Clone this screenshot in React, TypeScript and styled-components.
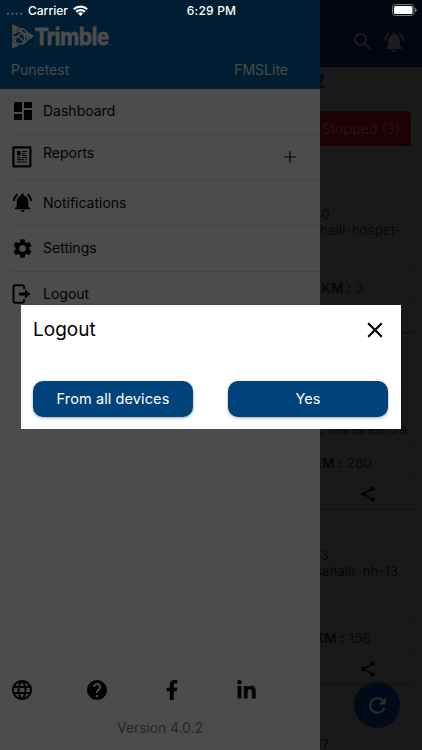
import React from "react";
import styled, { createGlobalStyle } from "styled-components";
import {
  MdDashboard,
  MdNotificationsActive,
  MdSettings,
  MdSearch,
  MdShare,
  MdRefresh,
  MdHelp,
  MdLanguage,
  MdClose,
} from "react-icons/md";
import { FaFacebookF, FaLinkedinIn } from "react-icons/fa";

const GlobalStyle = createGlobalStyle`
  *, *::before, *::after { box-sizing: border-box; }
  body { margin: 0; background: #191919; font-family: Inter, "Liberation Sans", sans-serif; }
  svg { display: block; flex: none; }
  button { font: inherit; border: 0; padding: 0; background: none; color: inherit; }
`;

const Screen = styled.main`
  position: relative;
  width: 422px;
  height: 750px;
  overflow: hidden;
  background: #191919;
`;

/* status bar */
const StatusBar = styled.header`
  position: absolute;
  inset: 0 0 auto 0;
  z-index: 3;
  height: 21px;
  padding: 0 5px 0 6px;
  display: grid;
  grid-template-columns: 1fr auto 1fr;
  align-items: center;
  color: #fff;
  font-size: 12px;
  font-weight: 500;
  line-height: 21px;
`;
const Carrier = styled.div`
  display: flex;
  align-items: center;
`;
const CarrierName = styled.span`
  margin: 0 5px;
`;
const Time = styled.span`
  letter-spacing: 0.2px;
`;
const BatterySlot = styled.div`
  display: flex;
  justify-content: flex-end;
  padding-bottom: 1px;
`;

/* page behind the drawer */
const Page = styled.section`
  display: flex;
  flex-direction: column;
  height: 750px;
  color: #070707;
`;
const TopBar = styled.div`
  flex: none;
  height: 67px;
  padding: 17px 16px 0 0;
  display: flex;
  justify-content: flex-end;
  align-items: center;
  gap: 7px;
  background: #00050f;
  color: #1d1d1d;
`;
const VehicleStrip = styled.div`
  flex: none;
  height: 31px;
  border-bottom: 1px solid #141414;
  padding: 3px 97px 0 0;
  text-align: right;
  font-size: 20px;
  font-weight: 800;
  line-height: 22px;
  color: #030a12;
`;
const Stopped = styled.div`
  flex: none;
  align-self: flex-end;
  width: 120px;
  height: 35px;
  margin: 13px 11px 18px 0;
  padding-right: 11px;
  border-radius: 2px;
  background: #1a0205;
  color: #300f12;
  font-size: 14px;
  line-height: 35px;
  text-align: right;
`;
const Card = styled.article<{ $height: number; $gap: number }>`
  flex: none;
  height: ${(p) => p.$height}px;
  width: 407px;
  margin: 0 0 ${(p) => p.$gap}px 8px;
  border: 1px solid #161616;
  border-bottom-color: #111;
  display: flex;
  flex-direction: column;
`;
const CardText = styled.div<{ $top: number; $right: number }>`
  flex: 1;
  padding: ${(p) => p.$top}px ${(p) => p.$right}px 0 0;
  font-size: 13px;
  line-height: 16px;
  letter-spacing: 0.2px;
  text-align: right;
  white-space: nowrap;
`;
const Line = styled.div<{ $indent?: number }>`
  padding-right: ${(p) => p.$indent ?? 0}px;
`;
const Distance = styled.div<{ $pad: number }>`
  height: 33px;
  padding-right: ${(p) => p.$pad}px;
  border-top: 1px solid #151515;
  text-align: right;
  font-size: 13.5px;
  line-height: 34px;
  letter-spacing: 0.1px;
`;
const Bold = styled.b`
  font-weight: 700;
`;
const ShareRow = styled.div<{ $height?: number }>`
  height: ${(p) => p.$height ?? 31}px;
  padding-right: 37px;
  border-top: 1px solid #141414;
  display: flex;
  align-items: center;
  justify-content: flex-end;
  color: #020202;
`;
const RefreshButton = styled.button`
  position: absolute;
  left: 354px;
  top: 682px;
  width: 46px;
  height: 46px;
  border-radius: 50%;
  display: grid;
  place-items: center;
  background: #000a18;
  color: #2b2b2b;
`;

/* drawer */
const Drawer = styled.aside`
  position: absolute;
  left: 0;
  top: 0;
  z-index: 1;
  width: 320px;
  height: 750px;
  display: flex;
  flex-direction: column;
  background: #4c4c4c;
  color: #020202;
`;
const DrawerHead = styled.div`
  flex: none;
  height: 89px;
  padding: 24px 32px 0 11px;
  background: #001d31;
  color: #4c4c4c;
`;
const Account = styled.div`
  display: flex;
  justify-content: space-between;
  margin-top: 11px;
  font-size: 14px;
  line-height: 20px;
`;
const Menu = styled.nav`
  display: flex;
  flex-direction: column;
  padding-left: 11px;
`;
const MenuItem = styled.div<{ $height: number }>`
  height: ${(p) => p.$height}px;
  padding-bottom: 1px;
  display: flex;
  align-items: center;
  border-bottom: 1px solid #424348;
  font-size: 14px;
`;
const MenuIcon = styled.span`
  display: grid;
  justify-items: center;
  width: 22px;
  margin-right: 10px;
`;
const MenuLabel = styled.span<{ $raise?: boolean }>`
  flex: 1;
  padding-bottom: ${(p) => (p.$raise ? 10 : 1)}px;
`;
const Expand = styled.span`
  margin-right: 24px;
  padding-bottom: 1px;
`;
const DrawerFoot = styled.footer`
  margin-top: auto;
  height: 73px;
`;
const Links = styled.div`
  display: grid;
  grid-template-columns: repeat(4, 75px);
  justify-items: center;
  align-items: center;
  height: 26px;
  margin-left: -16px;
`;
const Version = styled.div`
  margin-top: 14px;
  text-align: center;
  font-size: 14px;
  line-height: 22px;
  letter-spacing: -0.1px;
  color: #262626;
`;

/* dialog */
const Dialog = styled.section`
  position: absolute;
  left: 21px;
  top: 305px;
  z-index: 2;
  width: 380px;
  height: 124px;
  padding: 13px 13px 12px 12px;
  display: flex;
  flex-direction: column;
  justify-content: space-between;
  background: #fff;
  color: #000;
`;
const DialogHead = styled.div`
  display: flex;
  justify-content: space-between;
  align-items: center;
  height: 24px;
`;
const Title = styled.h1`
  margin: 0;
  font-size: 19px;
  font-weight: 400;
  line-height: 24px;
`;
const Actions = styled.div`
  display: flex;
  justify-content: space-between;
`;
const Action = styled.button`
  width: 160px;
  height: 36px;
  padding-bottom: 1px;
  border-radius: 10px;
  background: #00437b;
  color: #fff;
  font-size: 14.5px;
  letter-spacing: 0.1px;
  box-shadow: 0 1px 3px rgba(0, 30, 70, 0.4);
`;
const CloseButton = styled.button`
  display: grid;
  place-items: center;
`;

const Dots = () => (
  <svg width="17" height="8" viewBox="0 0 17 8" fill="#465967">
    {[2, 6.4, 10.8, 15.2].map((x) => (
      <circle key={x} cx={x} cy="6.8" r="1.2" />
    ))}
  </svg>
);
const Wifi = () => (
  <svg width="15" height="11" viewBox="0 0 15 11" fill="none" stroke="#fff" strokeWidth="2.2">
    <path d="M.8 4.3a9.6 9.6 0 0 1 13.4 0M3.2 6.900a6.100 6.100 0 0 1 8.600 0" />
    <path d="M7.500 11 5 8.500a3.500 3.500 0 0 1 5 0Z" fill="#fff" stroke="none" />
  </svg>
);
const Battery = () => (
  <svg width="25" height="12" viewBox="0 0 25 12">
    <rect x=".5" y=".5" width="21.5" height="11" rx="3" fill="none" stroke="#777b80" />
    <rect x="2" y="2" width="18.5" height="8" rx="1.6" fill="#fff" />
    <path d="M23 4v4c1-.3 1.6-1.1 1.6-2S24 4.3 23 4Z" fill="#777b80" />
  </svg>
);
const LogoRow = styled.div`
  height: 25px;
  display: flex;
  align-items: center;
`;
const Wordmark = styled.span`
  display: inline-block;
  width: 75px;
  font-family: "Liberation Sans", Inter, sans-serif;
  font-size: 24px;
  font-weight: 700;
  line-height: 25px;
  letter-spacing: -0.5px;
  -webkit-text-stroke: 0.9px currentColor;
  transform: scaleX(0.9);
  transform-origin: left center;
`;
const Registered = styled.sup`
  font-size: 8px;
  line-height: 1;
  vertical-align: baseline;
  -webkit-text-stroke: 0;
`;
const Globe = () => (
  <svg width="24" height="25" viewBox="0 0 24 25" fill="none" stroke="currentColor">
    <path d="M1.200 .3 8 3.200 1.200 9ZM1.200 24.300 8 21.400 1.200 16ZM23 12.300 17.500 8.300v8Z" fill="currentColor" stroke="none" />
    <circle cx="9.500" cy="12.300" r="8.700" fill="#001d31" stroke="none" />
    <circle cx="9.500" cy="12.300" r="7.700" strokeWidth="1.700" />
    <path d="M3 9.500c4-3.500 9-2 13 4M4 17c1-5 6-9 12-7M7.500 5.500c4 1 7 6 6 13M2.500 13.500c4-2 8 0 10.500 5.500" strokeWidth="1.400" />
    <circle cx="19.400" cy="20" r=".8" fill="currentColor" stroke="none" />
  </svg>
);
const ReportIcon = () => (
  <svg width="20" height="22" viewBox="0 0 20 22" fill="none" stroke="currentColor">
    <rect x="1.400" y="1.400" width="17" height="19" rx=".3" strokeWidth="2.200" />
    <path d="M5 5h3.500v4.500H5Z" fill="currentColor" stroke="none" />
    <path d="M10 5.500h5M10 7.500h3.500M10 9.500h5M5 11.700h4M10 11.700h5M5 13.800h7M5 16h10M13.500 13.800h1.500" strokeWidth="1.100" />
  </svg>
);
const LogoutIcon = () => (
  <svg width="20" height="20" viewBox="0 0 20 20">
    <path d="M12 5V2.400A1.200 1.200 0 0 0 10.800 1.200H3A1.500 1.500 0 0 0 1.500 2.700v14.600A1.500 1.500 0 0 0 3 18.800h7.800a1.200 1.200 0 0 0 1.200-1.200V15" fill="none" stroke="currentColor" strokeWidth="1.900" />
    <path d="M7 8.500h6V5.300l5.500 4.700-5.500 4.700v-3.200H7Z" fill="currentColor" />
  </svg>
);
const PlusIcon = () => (
  <svg width="12" height="12" viewBox="0 0 12 12" stroke="currentColor" strokeWidth="1.200">
    <path d="M6 0v12M0 6h12" />
  </svg>
);

export default function App() {
  return (
    <Screen>
      <GlobalStyle />
      <StatusBar>
        <Carrier>
          <Dots />
          <CarrierName>Carrier</CarrierName>
          <Wifi />
        </Carrier>
        <Time>6:29 PM</Time>
        <BatterySlot>
          <Battery />
        </BatterySlot>
      </StatusBar>

      <Page>
        <TopBar>
          <MdSearch size={24} />
          <MdNotificationsActive size={24} />
        </TopBar>
        <VehicleStrip>2</VehicleStrip>
        <Stopped>Stopped (3)</Stopped>
        <Card $height={169} $gap={0}>
          <CardText $top={41} $right={13}>
            <Line $indent={71}>40</Line>
            <Line>ahalli-hospet-</Line>
          </CardText>
          <Distance $pad={50}>
            <Bold>KM :</Bold> 3
          </Distance>
          <ShareRow $height={29} />
        </Card>
        <Card $height={177} $gap={9}>
          <CardText $top={87} $right={7}>
            <Line>, maharashtra</Line>
          </CardText>
          <Distance $pad={42}>
            <Bold>KM :</Bold> 280
          </Distance>
          <ShareRow>
            <MdShare size={18} />
          </ShareRow>
        </Card>
        <Card $height={166} $gap={9}>
          <CardText $top={27} $right={12}>
            <Line $indent={73}>43</Line>
            <Line>
              sahalli, nh-13,
            </Line>
          </CardText>
          <Distance $pad={43}>
            <Bold>KM :</Bold> 156
          </Distance>
          <ShareRow>
            <MdShare size={18} />
          </ShareRow>
        </Card>
        <Card $height={100} $gap={0}>
          <CardText $top={41} $right={85}>
            <Line>17</Line>
          </CardText>
        </Card>
      </Page>
      <RefreshButton aria-label="Refresh">
        <MdRefresh size={25} />
      </RefreshButton>

      <Drawer>
        <DrawerHead>
          <LogoRow>
            <Globe />
            <Wordmark>
              Trimble<Registered>.</Registered>
            </Wordmark>
          </LogoRow>
          <Account>
            <span>Punetest</span>
            <span>FMSLite</span>
          </Account>
        </DrawerHead>
        <Menu>
          <MenuItem $height={46}>
            <MenuIcon><MdDashboard size={24} /></MenuIcon>
            <MenuLabel>Dashboard</MenuLabel>
          </MenuItem>
          <MenuItem $height={46}>
            <MenuIcon><ReportIcon /></MenuIcon>
            <MenuLabel $raise>Reports</MenuLabel>
            <Expand><PlusIcon /></Expand>
          </MenuItem>
          <MenuItem $height={45}>
            <MenuIcon><MdNotificationsActive size={23} /></MenuIcon>
            <MenuLabel>Notifications</MenuLabel>
          </MenuItem>
          <MenuItem $height={46}>
            <MenuIcon><MdSettings size={23} /></MenuIcon>
            <MenuLabel>Settings</MenuLabel>
          </MenuItem>
          <MenuItem $height={46}>
            <MenuIcon><LogoutIcon /></MenuIcon>
            <MenuLabel>Logout</MenuLabel>
          </MenuItem>
        </Menu>
        <DrawerFoot>
          <Links>
            <MdLanguage size={24} />
            <MdHelp size={24} />
            <FaFacebookF size={20} />
            <FaLinkedinIn size={21} />
          </Links>
          <Version>Version 4.0.2</Version>
        </DrawerFoot>
      </Drawer>

      <Dialog role="dialog">
        <DialogHead>
          <Title>Logout</Title>
          <CloseButton aria-label="Close">
            <MdClose size={26} />
          </CloseButton>
        </DialogHead>
        <Actions>
          <Action>From all devices</Action>
          <Action>Yes</Action>
        </Actions>
      </Dialog>
    </Screen>
  );
}
